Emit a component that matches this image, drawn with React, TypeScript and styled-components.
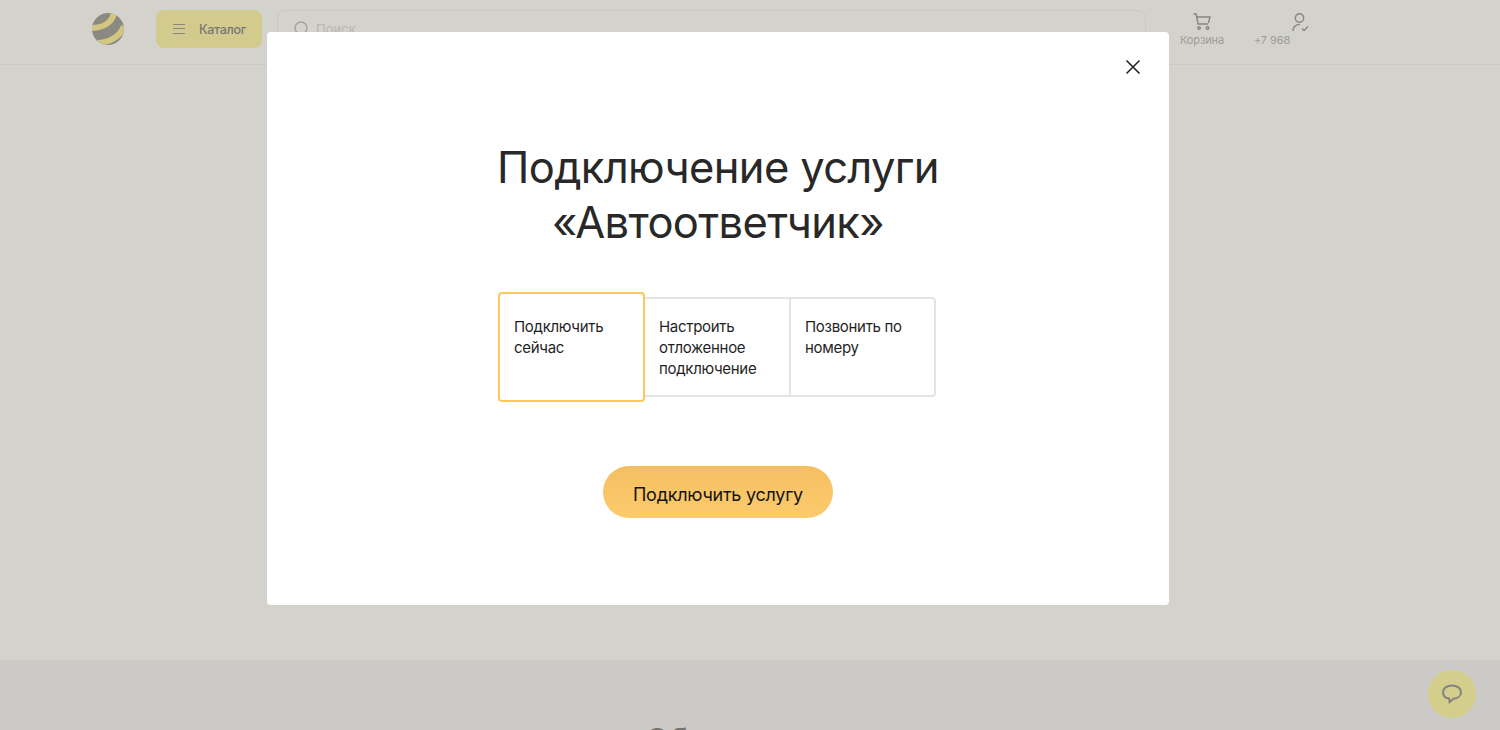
import React from 'react';
import styled, {createGlobalStyle} from 'styled-components';

const GlobalStyle = createGlobalStyle`
    html, body {
        margin: 0;
        padding: 0;
        height: 730px;
        overflow: hidden;
        background: #ffffff;
        font-family: Inter, "Noto Sans", sans-serif;
    }
`;

const Page = styled.div`
    position: relative;
    height: 730px;
    display: flex;
    flex-direction: column;
    overflow: hidden;
`;

const Header = styled.header`
    height: 65px;
    box-sizing: border-box;
    border-bottom: 1px solid #f6f6f5;
    display: flex;
    align-items: center;
    padding: 0 0 6px 92px;
`;

const Logo = styled.svg`
    width: 32px;
    height: 34px;
    margin-right: 32px;
`;

const CatalogButton = styled.div`
    width: 106px;
    height: 38px;
    border-radius: 8px;
    background: #fff6af;
    display: flex;
    align-items: center;
    padding-left: 17px;
    box-sizing: border-box;
    gap: 14px;
    font-size: 12.5px;
    font-weight: 500;
    letter-spacing: -0.3px;
    color: #8f8f8f;
    margin-right: 15px;
`;

const MenuLines = styled.span`
    width: 12px;
    height: 8px;
    border-top: 1.5px solid #a0a0a0;
    border-bottom: 1.5px solid #a0a0a0;
    position: relative;
    &::after {
        content: "";
        position: absolute;
        left: 0;
        right: 0;
        top: 3px;
        border-top: 1.5px solid #a0a0a0;
    }
`;

const Search = styled.div`
    width: 869px;
    height: 38px;
    box-sizing: border-box;
    border: 1px solid #f3f3f2;
    border-radius: 8px;
    display: flex;
    align-items: center;
    gap: 6px;
    padding-left: 16px;
    font-size: 13px;
    color: #e0e0e0;
    margin-right: 34px;
`;

const HeaderLink = styled.div<{$width: number; $iconShift?: number}>`
    width: ${(props) => props.$width}px;
    display: flex;
    flex-direction: column;
    align-items: center;
    gap: 1px;
    font-size: 11px;
    letter-spacing: -0.1px;
    color: #bdbdbd;
    svg {
        width: 20px;
        height: 20px;
        color: #a0a0a0;
        margin-left: ${(props) => props.$iconShift || 0}px;
    }
`;

const Main = styled.main`
    flex: 1;
`;

const Footer = styled.footer`
    height: 70px;
    background: #f6f6f7;
    padding: 61px 0 0 645px;
    box-sizing: border-box;
    font-size: 32px;
    color: #8a8a8a;
    white-space: nowrap;
`;

const Overlay = styled.div`
    position: absolute;
    inset: 0;
    background: rgba(35, 30, 5, 0.2);
    backdrop-filter: blur(0.7px);
    padding: 32px 0 0 267px;
`;

const Modal = styled.div`
    position: relative;
    width: 902px;
    height: 573px;
    box-sizing: border-box;
    background: #ffffff;
    border-radius: 4px;
    padding-top: 108px;
    display: flex;
    flex-direction: column;
    align-items: center;
`;

const CloseButton = styled.button`
    position: absolute;
    top: 25px;
    right: 26px;
    width: 20px;
    height: 20px;
    padding: 0;
    border: none;
    background: none;
    color: #1f1f1f;
    svg {
        display: block;
        width: 20px;
        height: 20px;
    }
`;

const Title = styled.h2`
    margin: 0 0 42px;
    font-size: 43.5px;
    line-height: 55px;
    font-weight: 400;
    letter-spacing: -0.65px;
    text-align: center;
    color: #282828;
`;

const Options = styled.div`
    display: flex;
    align-items: center;
    width: 440px;
    height: 110px;
    margin-bottom: 64px;
`;

const Option = styled.div<{$active?: boolean; $edge?: string}>`
    box-sizing: border-box;
    width: ${(props) => (props.$edge === 'middle' ? '146px' : '147px')};
    height: ${(props) => (props.$active ? '110px' : '100px')};
    padding: ${(props) => (props.$active ? '22px' : '17px')} 12px 0 ${(props) => (props.$edge === 'middle' ? '15px' : '14px')};
    font-size: 15px;
    line-height: 21px;
    letter-spacing: -0.3px;
    color: #1f1f1f;
    background: #ffffff;
    border: 2px solid ${(props) => (props.$active ? '#fdc85a' : '#e4e4e4')};
    border-left-width: ${(props) => (props.$edge === 'middle' ? '0' : '2px')};
    border-right-width: ${(props) => (props.$edge === 'middle' ? '0' : '2px')};
    border-radius: ${(props) => (props.$active ? '4px' : props.$edge === 'last' ? '0 4px 4px 0' : '0')};
    margin-right: ${(props) => (props.$edge === 'last' ? '0' : '-1px')};
    position: relative;
    z-index: ${(props) => (props.$active ? 1 : 0)};
`;

const SubmitButton = styled.button`
    width: 230px;
    height: 52px;
    border: none;
    border-radius: 26px;
    background: linear-gradient(180deg, #f4bf63 0%, #fdcb6b 100%);
    font-family: inherit;
    font-size: 18px;
    letter-spacing: -0.25px;
    color: #141414;
    padding: 5px 0 0;
`;

const ChatButton = styled.div`
    position: absolute;
    left: 1428px;
    top: 670px;
    width: 48px;
    height: 48px;
    border-radius: 50%;
    background: #fffbae;
    display: flex;
    align-items: center;
    justify-content: center;
    color: #9c9c9a;
    svg {
        width: 22px;
        height: 22px;
    }
`;

export default function App() {
    return (
        <Page>
            <GlobalStyle />
            <Header>
                <Logo viewBox="0 0 32 32">
                    <defs>
                        <clipPath id="ball">
                            <circle cx="16" cy="16" r="16" />
                        </clipPath>
                    </defs>
                    <g clipPath="url(#ball)">
                        <rect width="32" height="32" fill="#a4a4a2" />
                        <g fill="none" stroke="#fff0a0" strokeWidth="6">
                            <path d="M22 0C20 9 12 15 -1 15" />
                            <path d="M32 13C29 22 20 29 6 30" />
                        </g>
                    </g>
                </Logo>
                <CatalogButton>
                    <MenuLines />
                    Каталог
                </CatalogButton>
                <Search>
                    <svg width="16" height="16" viewBox="0 0 16 16" fill="none" stroke="#c4c4c4" strokeWidth="1.4">
                        <circle cx="7" cy="7" r="6" />
                        <path d="M11.5 11.5 15 15" />
                    </svg>
                    Поиск
                </Search>
                <HeaderLink $width={44}>
                    <svg viewBox="0 0 20 20" fill="none" stroke="currentColor" strokeWidth="1.4">
                        <path d="M1.5 2h2.6l2 10h10M5 5h13l-1.6 6" />
                        <circle cx="7" cy="16" r="1.3" />
                        <circle cx="15.5" cy="16" r="1.3" />
                    </svg>
                    Корзина
                </HeaderLink>
                <HeaderLink $width={96} $iconShift={56}>
                    <svg viewBox="0 0 20 20" fill="none" stroke="currentColor" strokeWidth="1.4">
                        <circle cx="9.5" cy="6" r="4.2" />
                        <path d="M3 19c0-4 2.5-6.500 7-6.500M12 16.500l2 2 4-4" />
                    </svg>
                    +7 968
                </HeaderLink>
            </Header>
            <Main />
            <Footer>Обратная связь</Footer>
            <ChatButton>
                <svg viewBox="0 0 22 22" fill="none" stroke="currentColor" strokeWidth="2">
                    <path d="M11 2.500c5 0 9 2.600 9 6.700 0 3.800-3.500 6.300-7.500 6.600L8.600 19l-.5-3.400C4.400 15 2 12.800 2 9.200 2 5.100 6 2.500 11 2.500Z" />
                </svg>
            </ChatButton>
            <Overlay>
                <Modal>
                    <CloseButton aria-label="Закрыть">
                        <svg viewBox="0 0 20 20" fill="none" stroke="currentColor" strokeWidth="1.5">
                            <path d="M3.500 3.500 16.500 16.500M16.500 3.500 3.500 16.500" />
                        </svg>
                    </CloseButton>
                    <Title>
                        Подключение услуги
                        <br />
                        «Автоответчик»
                    </Title>
                    <Options>
                        <Option $active>Подключить сейчас</Option>
                        <Option $edge="middle">Настроить отложенное подключение</Option>
                        <Option $edge="last">Позвонить по номеру</Option>
                    </Options>
                    <SubmitButton>Подключить услугу</SubmitButton>
                </Modal>
            </Overlay>
        </Page>
    );
}
